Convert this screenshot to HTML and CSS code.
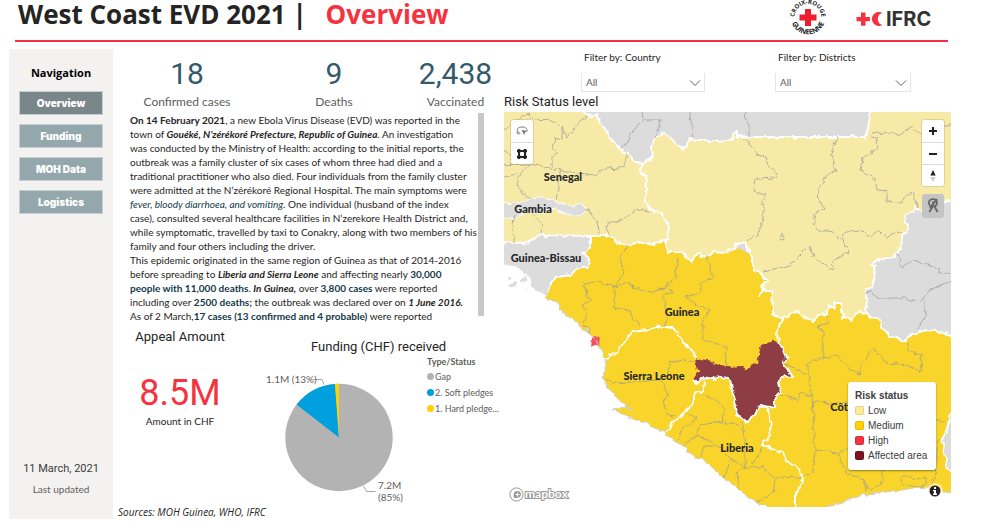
FILE: index.html
```html
<!DOCTYPE html>
<html lang="en">
<head>
<meta charset="utf-8">
<title>West Coast EVD 2021 | Overview</title>
<link rel="stylesheet" href="styles.css">
</head>
<body>
<div class="page">
  <header class="header">
    <h1 class="title">West Coast EVD 2021 | <span class="title-page">Overview</span></h1>
    <div class="logos">
      <svg class="logo-crg" viewBox="0 0 40 40" role="img" aria-label="Croix-Rouge Guinéenne">
        <defs>
          <path id="ring-top" d="M8.5 27.500A13.500 13.500 0 1 1 31.500 27.500"/>
          <path id="ring-bottom" d="M4 26.500A17.200 17.200 0 0 0 36 26.500"/>
        </defs>
        <path fill="#ed1c2e" d="M17 12h6v5.500h5.500v6H23V29h-6v-5.500h-5.500v-6H17z"/>
        <text class="ring-text"><textPath href="#ring-top" startOffset="50%" text-anchor="middle">CROIX-ROUGE</textPath></text>
        <text class="ring-text ring-text-bottom"><textPath href="#ring-bottom" startOffset="50%" text-anchor="middle">GUINEENNE</textPath></text>
      </svg>
      <svg class="logo-ifrc" viewBox="0 0 78 20" role="img" aria-label="IFRC">
        <path fill="#f5333f" d="M5 3.500h4.500v4.400h4.400v4.400H9.500v4.500H5v-4.500H.5V7.900H5z"/>
        <path fill="#f5333f" d="M26.500 4A7 7 0 1 0 26.500 16A6.200 6.200 0 0 1 26.500 4z"/>
        <text x="30" y="17" class="ifrc-text">IFRC</text>
      </svg>
    </div>
  </header>

  <main class="main">
    <aside class="sidebar">
      <h2 class="nav-title">Navigation</h2>
      <nav class="nav">
        <button class="nav-button nav-button-active" type="button">Overview</button>
        <button class="nav-button" type="button">Funding</button>
        <button class="nav-button" type="button">MOH Data</button>
        <button class="nav-button" type="button">Logistics</button>
      </nav>
      <div class="updated">
        <div class="updated-date">11 March, 2021</div>
        <div class="updated-label">Last updated</div>
      </div>
    </aside>

    <section class="center">
      <div class="stats">
        <div class="stat"><div class="stat-value">18</div><div class="stat-label">Confirmed cases</div></div>
        <div class="stat"><div class="stat-value">9</div><div class="stat-label">Deaths</div></div>
        <div class="stat"><div class="stat-value">2,438</div><div class="stat-label">Vaccinated</div></div>
      </div>

      <div class="story">
        <p class="story-text"><b>On 14 February 2021</b>, a new Ebola Virus Disease (EVD) was reported in the<br>
          town of <b><i>Gouéké, N’zérékoré Prefecture, Republic of Guinea</i></b>. An investigation<br>
          was conducted by the Ministry of Health: according to the initial reports, the<br>
          outbreak was a family cluster of six cases of whom three had died and a<br>
          traditional practitioner who also died. Four individuals from the family cluster<br>
          were admitted at the N’zérékoré Regional Hospital. The main symptoms were<br>
          <i class="navy">fever, bloody diarrhoea, and vomiting</i>. One individual (husband of the index<br>
          case), consulted several healthcare facilities in N’zerekore Health District and,<br>
          while symptomatic, travelled by taxi to Conakry, along with two members of his<br>
          family and four others including the driver.<br>
          This epidemic originated in the same region of Guinea as that of 2014-2016<br>
          before spreading to <b><i>Liberia and Sierra Leone</i></b> and affecting nearly <b class="navy">30,000</b><br>
          <b class="navy">people with 11,000 deaths</b>. <b><i>In Guinea,</i></b> over <b class="navy">3,800 cases</b> were reported<br>
          including over <b class="navy">2500 deaths;</b> the outbreak was declared over on <b><i>1 June 2016.</i></b><br>
          As of 2 March,<b class="navy">17 cases (13 confirmed and 4 probable)</b> were reported</p>
        <div class="story-scroll"></div>
      </div>

      <div class="money">
        <div class="appeal">
          <h2 class="panel-title">Appeal Amount</h2>
          <div class="appeal-value">8.5M</div>
          <div class="appeal-label">Amount in CHF</div>
        </div>
        <div class="funding">
          <h2 class="panel-title">Funding (CHF) received</h2>
          <div class="chart">
            <svg class="pie" viewBox="261 356 150 150" role="img" aria-label="Funding received by type">
              <circle cx="339" cy="438.500" r="53.700" fill="#b3b3b3"/>
              <path fill="#00a0df" d="M339 438.500L296.500 405.600A53.700 53.700 0 0 1 335 384.900z"/>
              <path fill="#ffd100" d="M339 438.500L335 384.900A53.700 53.700 0 0 1 339 384.800z"/>
              <path class="leader" d="M314 380.500h8l2 5M363.500 487l3 5.500h9"/>
              <text x="266" y="384">1.1M (13%)</text>
              <text x="378" y="490">7.2M</text>
              <text x="378" y="502">(85%)</text>
            </svg>
            <div class="legend">
              <div class="legend-title">Type/Status</div>
              <ul class="legend-list">
                <li><span class="dot dot-gap"></span>Gap</li>
                <li><span class="dot dot-soft"></span>2. Soft pledges</li>
                <li><span class="dot dot-hard"></span>1. Hard pledge...</li>
              </ul>
            </div>
          </div>
        </div>
      </div>
      <p class="sources">Sources: MOH Guinea, WHO, IFRC</p>
    </section>

    <section class="risk">
      <div class="filters">
        <div class="filter filter-country">
          <label class="filter-label" for="country">Filter by: Country</label>
          <div class="select-box">
            <select id="country"><option>All</option></select>
            <svg class="chevron" viewBox="0 0 12 8"><path d="M1 1.500l5 5 5-5"/></svg>
          </div>
        </div>
        <div class="filter filter-district">
          <label class="filter-label" for="district">Filter by: Districts</label>
          <div class="select-box">
            <select id="district"><option>All</option></select>
            <svg class="chevron" viewBox="0 0 12 8"><path d="M1 1.500l5 5 5-5"/></svg>
          </div>
        </div>
      </div>
      <h2 class="risk-title">Risk Status level</h2>
      <div class="map">
        <svg class="map-drawing" viewBox="504 112 447 395" role="img" aria-label="Map of risk status by country">
          <defs>
            <filter id="rough" x="-5%" y="-5%" width="110%" height="110%">
              <feTurbulence type="fractalNoise" baseFrequency="0.16" numOctaves="2" seed="4"/>
              <feDisplacementMap in="SourceGraphic" scale="6" xChannelSelector="R" yChannelSelector="G"/>
            </filter>
          </defs>
          <g filter="url(#rough)">
            <path class="land-none" d="M494 102H961V485L860 400 600 260 588 268 578 269 572 275 555 277 547 296 540 293 532 288 530 278 518 268 494 265zM505 277l7-1-3 4zM508 286l8-5 2 4-7 3zM519 280l7-3 1 4-5 2zM524 289l3-2v3z"/>
            <path class="land-medium" d="M590 236L640 225 780 260 860 300 866 312 870 317 878 318 883 328 890 336 905 341 912 334 927 330 943 332 961 342V408L951 413 947 430 942 440 945 453 948 470 961 478V494L951 493 930 489 917 488 887 492 860 495 843 502 822 509 815 517H775L767 507 750 498 737 488 730 483 713 468 700 458 688 453 687 448 670 439 665 432 650 425 628 417 613 409 627 407 617 398 615 392 606 390 608 385 603 378 605 370 606 363 602 352 597 343 592 335 577 323 563 313 557 302 545 298 548 292 555 277 572 275 578 268 588 268 589 258 583 253 590 249z"/>
            <path class="land-low" d="M494 102H580L583 112 588 117 597 115 600 122 606 130 608 137 615 142 620 150 628 153 633 160 642 164 648 162 653 155 652 148 655 138 660 136 665 133 673 140 684 150 690 139 707 141 720 141 732 139 733 134 737 131 737 137 866 137 871 112 873 102H961V202L947 201 933 217 920 210 917 207 913 211 907 215 904 220 908 225 907 233 902 234 902 240 900 250 893 257 880 259 870 264 874 267 875 277 872 287 867 290 867 300 866 312 855 314 850 319 843 318 841 303 835 303 835 308 828 305 827 314 817 315 814 321 803 317 798 312 792 313 783 320 773 313 772 293 763 290 759 295 762 287 768 281 760 273 753 270 753 257 745 243 738 242 735 248 725 253 713 252 703 257 698 253 691 262 682 252 667 252 665 241 668 238 668 223 662 213 650 210 645 200 646 192 647 178 640 172 642 164 640 172 647 178 646 192 645 200 650 210 662 213 668 223 668 238 665 241 647 244 637 242 628 247 617 242 610 236 590 236 540 235 525 243 494 242z"/>
            <path class="land-none" d="M494 203L520 204 532 198 543 196 551 200 560 202 572 206 583 204 587 208 583 213 575 216 563 213 555 209 543 212 520 213 517 218 494 218z"/>
            <g class="districts">
              <path d="M494 136L528 114 534 120 555 121 562 128 567 137 580 122 587 117M562 128V140L555 138 553 148 558 153 552 157V167M494 165L530 164 545 167 560 170 577 173 595 175 603 169 622 168 627 158 626 152M559 168V190L557 200M494 180L520 173 517 185 525 195 532 198M515 213L512 230 515 242M533 213L542 225 540 235M586 208L597 222 600 236M608 236L607 222 617 222 633 213 638 209 650 212M504 150l10 8-4 8M520 173l12-9"/>
              <path d="M747 102L745 120 749 125V137M623 148L633 130 643 120 641 102M643 120L662 120 657 132 655 138M688 102L692 127 693 138"/>
              <path d="M743 138L753 147 757 155 765 157 767 165 777 173 775 178 755 179 753 189 760 195 766 192 763 202V218L760 232 747 242M838 137L831 155 836 172 828 173 818 190 819 200 824 208 815 213 813 223 819 231 830 231 840 238 847 232 863 231 870 237 880 231 887 238 897 232 902 234M870 137L877 138 878 148 863 158 861 170 875 180 877 190 887 191V202L897 203 913 192 918 207M872 133L900 134 913 127 922 137M943 125h18M763 272L790 265 810 245 813 257 832 270 835 258 848 252 842 238M779 239l2-4 4 2v3z"/>
              <path d="M867 292L880 298 902 298 920 302 930 290 961 278M898 255L902 267 913 260 937 268 940 273 961 274M925 302V318L917 330"/>
              <path d="M828 315V323L817 327 823 330V357L808 362V375L783 362M823 357L837 355 850 370 860 375V367L873 348 887 363 907 365 920 373 922 355 910 352 907 342"/>
              <path d="M627 247L620 258 623 272 615 287 598 282 583 283 590 302 582 305 587 315 583 323 592 335M617 287L625 283 647 292 660 290 675 278 678 258M615 289V308L630 310 633 318 643 327M660 290L668 285 673 292 663 295 667 318 664 327M707 255L713 278 703 282 700 292 685 297 700 308 710 310 702 322V340L713 342 727 348 725 365"/>
              <path d="M667 375L670 363 683 360 695 362M605 378L612 383 633 382 660 380 668 393 663 400 667 413 675 417M685 412L697 418 682 430 678 442M700 394L713 398 725 408 722 422 700 425 697 435 683 445M697 435L717 445 703 448 701 458M731 458L724 477M742 422L745 445V467L737 473 739 488M745 467L763 467 775 480 773 493 757 502M750 468L762 448M775 478L802 477M722 422l18 3M717 445l14 14 14 8"/>
              <path d="M780 395L798 400 800 392 812 397 815 450 812 473 802 477M812 402L848 403M815 450L837 453 860 443M837 453L847 473 865 480 867 492M883 470L882 483 870 491 865 480M902 477L927 478 923 487 903 485zM930 418L947 423M938 440L935 477 928 489M808 375L812 397"/>
            </g>
            <path class="land-high" d="M593 336l4-1 3 3-1 7-4-1-4 2z"/>
            <path class="land-affected" d="M695 358L700 360 717 363 730 367 740 366 747 369 757 363 761 345 770 342 775 342 783 348 787 357 783 363 788 370 792 378 782 377 778 383 781 392 775 398V408L760 405 755 415 746 422 737 415 735 400 732 390 730 380 720 377 713 379 703 377 697 384 693 380 699 373z"/>
            <path class="borders" d="M605 359L617 352 632 332 647 330 652 327 673 327 683 342 692 350 695 358M704 380L703 390 695 393 693 403 680 417 670 425 666 432M767 408L772 425 770 435 762 445 782 453 788 463 800 470 802 483 796 493V517M783 320L777 328 778 343 783 348 787 357 783 363 788 370 792 378 782 377 778 383 781 392 775 398V408L760 405 755 415 746 422 737 415 735 400 732 390 730 380 720 377 713 379 703 377 697 384 693 380M866 312L870 317 878 318 883 328 890 336 905 341 912 334 927 330 943 332 961 342M951 413L947 430 942 440 945 453 948 470 961 478M590 236V249L583 253 589 258 588 268 578 268 572 275 555 277 548 292"/>
            <path class="coast" d="M545 298L557 302 563 313 577 323 592 335 597 343 602 352 606 363 603 378 608 385 606 390 615 392 617 398 627 407 634 412 628 407 613 409 628 417 650 425 665 432 670 439 687 448 688 453 700 458 713 468 730 483 750 498 767 507M825 508L843 502 860 495 887 492 917 488 930 489 951 493"/>
          </g>
          <g class="places">
            <text x="563" y="181">Senegal</text>
            <text x="533" y="213">Gambia</text>
            <text x="546" y="262">Guinea-Bissau</text>
            <text x="682" y="316">Guinea</text>
            <text x="654" y="380">Sierra Leone</text>
            <text x="737" y="452">Liberia</text>
            <text x="842" y="411">Côte</text>
          </g>
          <g class="mapbox">
            <circle cx="516.500" cy="494.500" r="6.600"/>
            <path class="mapbox-pin" d="M514 498c-1-4 0-7 3.500-7 2 0 3.500 1.500 3.500 3.300 0 3.200-3 3.900-7 3.700z"/>
            <path class="mapbox-star" d="M517.500 492.500v4M515.500 494.500h4"/>
            <text x="525" y="498">mapbox</text>
          </g>
        </svg>
        <div class="tools tools-left">
          <button class="tool" type="button" aria-label="Lasso select"><svg viewBox="0 0 22 22"><path class="stroke-soft" d="M8 14c-2 0-2.500-1-1.500-2C5.500 8.500 7.500 7 11 7s5.500 1.500 5 4.500M8 14c1.500 0 1-2-1.500-2"/><path fill="#777" d="M10.500 10l6 1-2.500 1.200-.8 3z"/></svg></button>
          <button class="tool" type="button" aria-label="Polygon select"><svg viewBox="0 0 22 22"><path class="stroke-dark" d="M8 6v10M14 6v10M6 8h10M6 14h10"/><path d="M6.500 6.500h3v3h-3zM12.500 6.500h3v3h-3zM6.500 12.500h3v3h-3zM12.500 12.500h3v3h-3z"/></svg></button>
        </div>
        <div class="tools tools-right">
          <button class="tool" type="button" aria-label="Zoom in"><svg viewBox="0 0 22 22"><path class="stroke-dark" d="M11 7v8M7 11h8"/></svg></button>
          <button class="tool" type="button" aria-label="Zoom out"><svg viewBox="0 0 22 22"><path class="stroke-dark" d="M7 11h8"/></svg></button>
          <button class="tool" type="button" aria-label="Reset north"><svg viewBox="0 0 22 22"><path d="M8.300 10.500L11 5l2.700 5.500z"/><path fill="#ccc" d="M8.300 12L11 17l2.700-5z"/></svg></button>
        </div>
        <button class="tool tool-pin" type="button" aria-label="Toggle markers"><svg viewBox="0 0 24 24"><path class="stroke-pin" d="M12 4.500a4 4 0 0 1 1.500 7.800l3.500 6.200M11 12.500A4 4 0 0 1 12 4.500M12 12l-4 6.500M16.500 4.500l-8 9.500M12 7v5"/></svg></button>
        <div class="risk-legend">
          <div class="risk-legend-title">Risk status</div>
          <ul class="risk-list">
            <li><span class="swatch swatch-low"></span>Low</li>
            <li><span class="swatch swatch-medium"></span>Medium</li>
            <li><span class="swatch swatch-high"></span>High</li>
            <li><span class="swatch swatch-affected"></span>Affected area</li>
          </ul>
        </div>
        <button class="info" type="button" aria-label="Attribution"><svg viewBox="0 0 16 16"><circle cx="8" cy="8" r="5.500" fill="#222"/><path fill="#fff" d="M7 4h2v2H7zM6 7h3v3.500h1V12H6v-1.500h1V8.200H6z"/></svg></button>
      </div>
    </section>
  </main>
</div>
</body>
</html>
```
FILE: styles.css
```css
* { box-sizing: border-box; }
body { margin: 0; background: #fff; color: #252423; font-family: Lato, "Noto Sans", sans-serif; }
h1, h2, p, ul { margin: 0; padding: 0; font-weight: 400; list-style: none; }
button, select { font: inherit; border: 0; padding: 0; margin: 0; }
svg { display: block; }

.page { padding: 0 33px 4px 9px; }

.header { display: flex; align-items: center; justify-content: space-between; height: 42px; margin: 0 3px 0 6px; padding: 0 14px 12px 3px; border-bottom: 2px solid #f5333f; }
.title { font: 700 26px/28px "Open Sans", "Noto Sans", sans-serif; white-space: pre; }
.title-page { color: #f5333f; margin-left: 12px; }
.logos { display: flex; align-items: center; gap: 28px; padding-top: 10px; }
.logo-crg { width: 40px; height: 40px; margin: -12px 0 -8px; }
.logo-ifrc { width: 78px; height: 20px; }
.ring-text { font: 700 6px "Open Sans", sans-serif; fill: #222; }
.ring-text-bottom { font-size: 7px; }
.ifrc-text { font: 700 20px Inter, sans-serif; fill: #333; }

.main { display: grid; grid-template-columns: 104px minmax(0, 375fr) minmax(0, 447fr); gap: 8px; margin-top: 7px; }

.sidebar { display: flex; flex-direction: column; align-items: center; padding: 16px 10px 22px; background: #f3f2f1; }
.nav-title { font: 700 11px/16px "Open Sans", sans-serif; color: #000; }
.nav { display: flex; flex-direction: column; gap: 9px; align-self: stretch; margin-top: 10px; }
.nav-button { height: 24px; border: 1px solid #c3cfd2; background: #93a7ad; color: #fff; font: 900 10px Inter, sans-serif; cursor: pointer; }
.nav-button-active { background: #7a878a; }
.updated { margin-top: auto; text-align: center; color: #3d3c3b; }
.updated-date { font: 11px/16px Roboto, sans-serif; }
.updated-label { margin-top: 4px; font-size: 10px; line-height: 16px; color: #605e5c; }

.center { display: flex; flex-direction: column; }
.stats { display: grid; grid-template-columns: 132fr 162fr 81fr; height: 64px; padding-top: 8px; text-align: center; }
.stat-value { font: 30px/34px Roboto, sans-serif; color: #33596b; }
.stat-label { font-size: 12px; line-height: 22px; color: #605e5c; white-space: nowrap; }

.story { display: flex; height: 210px; margin-left: 9px; }
.story-text { flex: 1; min-width: 0; font-size: 10px; line-height: 14px; white-space: nowrap; }
.story-scroll { width: 6px; height: 203px; margin-right: 12px; background: #c8c8c8; }
.navy { color: #12394a; }

.money { display: flex; flex: 1; }
.appeal { flex: none; width: 118px; padding-top: 6px; text-align: center; }
.panel-title { font: 13px/16px Roboto, sans-serif; }
.appeal-value { margin-top: 28px; font: 36px/40px Roboto, sans-serif; color: #f5333f; }
.appeal-label { font-size: 10px; line-height: 16px; }
.funding { flex: none; padding: 16px 0 0 22px; }
.funding .panel-title { padding-left: 50px; }
.chart { display: flex; gap: 16px; }
.pie { flex: none; width: 150px; height: 150px; overflow: visible; }
.pie text { font: 10px Lato, sans-serif; fill: #605e5c; }
.leader { fill: none; stroke: #a6a6a6; }
.legend { font-size: 9px; line-height: 14px; color: #605e5c; white-space: nowrap; }
.legend-title { font-weight: 700; }
.legend-list { line-height: 16px; }
.dot { display: inline-block; width: 7px; height: 7px; margin-right: 1px; border-radius: 50%; }
.dot-gap { background: #b3b3b3; }
.dot-soft { background: #00a0df; }
.dot-hard { background: #ffd100; }
.sources { margin-left: -3px; font: italic 10px/14px "Open Sans", sans-serif; }

.filters { display: grid; grid-template-columns: 77fr 124fr 70fr 136fr 40fr; height: 44px; }
.filter-country { grid-column: 2; }
.filter-district { grid-column: 4; }
.filter-label { display: block; padding: 1px 0 0 3px; font-size: 10px; line-height: 14px; white-space: nowrap; }
.select-box { position: relative; margin-top: 9px; }
.select-box select { display: block; width: 100%; height: 19px; padding-left: 4px; border: solid #e6e6e6; border-width: 0 1px 1px; background: #fff; color: #605e5c; font-size: 10px; appearance: none; }
.chevron { position: absolute; right: 4px; top: 6px; width: 12px; height: 8px; fill: none; stroke: #605e5c; pointer-events: none; }
.risk-title { font: 13px/16px Roboto, sans-serif; padding-top: 1px; margin-bottom: 2px; }

.map { position: relative; overflow: hidden; }
.map-drawing { width: 100%; height: auto; background: #fff; }
.land-none { fill: #dcdcdc; stroke: #fff; stroke-width: 1; }
.land-medium { fill: #f9d42c; }
.land-low { fill: #f7e9a6; stroke: #fff; stroke-width: 2; stroke-linejoin: round; }
.land-high { fill: #f5505f; }
.land-affected { fill: #8e3e45; }
.districts { fill: none; stroke: #999; stroke-opacity: 0.7; stroke-width: 1; }
.borders { fill: none; stroke: #fff; stroke-width: 2; stroke-linejoin: round; }
.coast { fill: none; stroke: #d0d0d0; stroke-width: 1; }
.places text { font: 900 11px Lato, sans-serif; fill: #26282c; text-anchor: middle; }
.mapbox circle { fill: #fff; stroke: #999; }
.mapbox-pin { fill: #999; }
.mapbox-star { stroke: #fff; }
.mapbox text { font: 700 12px Lato, sans-serif; fill: #fff; stroke: #999; stroke-width: 2px; paint-order: stroke; }

.tools { position: absolute; top: 8px; display: flex; flex-direction: column; border-radius: 3px; background: #fff; box-shadow: 0 0 0 1px rgba(0, 0, 0, 0.1); overflow: hidden; }
.tools-left { left: 7px; }
.tools-right { right: 7px; }
.tool { width: 22px; height: 22px; background: #fff; cursor: pointer; }
.tool + .tool { border-top: 1px solid #ddd; }
.tool svg { width: 22px; height: 22px; fill: #222; }
.tool .stroke-dark { fill: none; stroke: #222; stroke-width: 2; }
.tool .stroke-soft { fill: none; stroke: #777; stroke-width: 1; }
.tool .stroke-pin { fill: none; stroke: #666; stroke-width: 2; }
.tool-pin { position: absolute; top: 82px; right: 7px; height: 24px; border-radius: 3px; background: #c4c4c4; }
.risk-legend { position: absolute; right: 15px; bottom: 37px; width: 88px; padding: 6px 7px 7px; border-radius: 3px; background: #fff; box-shadow: 0 1px 2px rgba(0, 0, 0, 0.4); font: 10px/15px "Liberation Sans", sans-serif; color: #404040; white-space: nowrap; }
.risk-legend-title { font-weight: 700; }
.risk-list li { display: flex; align-items: center; gap: 4px; }
.swatch { width: 9px; height: 9px; border: 1px solid rgba(0, 0, 0, 0.1); border-radius: 2px; }
.swatch-low { background: #ffe994; }
.swatch-medium { background: #ffd100; }
.swatch-high { background: #f5333f; }
.swatch-affected { background: #7a1420; }
.info { position: absolute; right: 8px; bottom: 8px; width: 16px; height: 16px; border-radius: 50%; background: rgba(255, 255, 255, 0.5); cursor: pointer; }
```
